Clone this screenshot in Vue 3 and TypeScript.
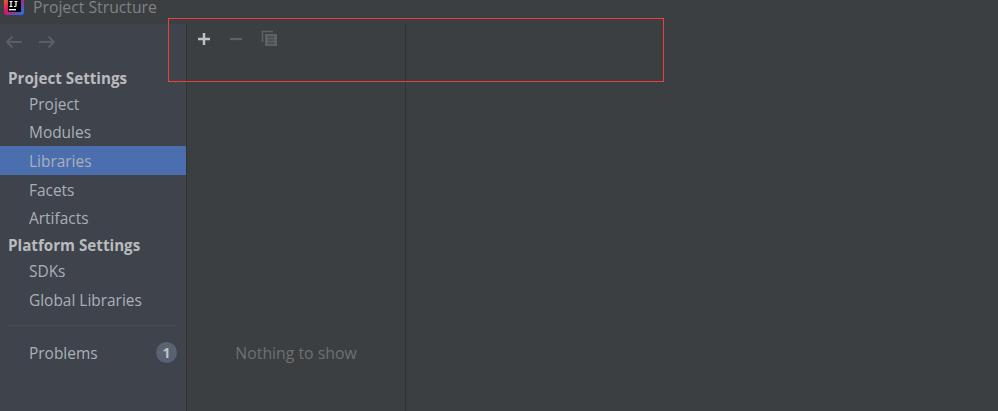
<script setup lang="ts">
interface Item { label: string; selected?: boolean }
const projectItems: Item[] = [
  { label: 'Project' },
  { label: 'Modules' },
  { label: 'Libraries', selected: true },
  { label: 'Facets' },
  { label: 'Artifacts' },
]
const platformItems: Item[] = [{ label: 'SDKs' }, { label: 'Global Libraries' }]
</script>

<template>
  <div class="window">
    <header class="titlebar">
      <svg class="logo" width="24" height="18" viewBox="0 0 24 18">
        <defs>
          <linearGradient id="lg" x1="0" y1="0" x2="1" y2="1">
            <stop offset="0" stop-color="#f97a12" />
            <stop offset="0.45" stop-color="#dd1265" />
            <stop offset="1" stop-color="#087cfa" />
          </linearGradient>
        </defs>
        <rect x="4" y="-5" width="20" height="20" rx="3" fill="url(#lg)" />
        <rect x="8" y="-2" width="13" height="14" fill="#000" />
        <rect x="9" y="9" width="7" height="1.4" fill="#fff" />
        <path d="M9.500 1.500h3M11 1.500v5M9.500 6.500h3M14.500 1.500h3M16 1.500v4.200q0 .8-1 .8h-1" stroke="#fff" stroke-width="1.200" fill="none" />
      </svg>
      <span class="title">Project Structure</span>
    </header>
    <div class="body">
      <aside class="sidebar">
        <div class="nav-arrows">
          <svg width="18" height="14" viewBox="0 0 18 14"><path d="M17 7H2M7.500 1.500 2 7l5.500 5.500" fill="none" stroke="#5b5e61" stroke-width="2" /></svg>
          <svg width="18" height="14" viewBox="0 0 18 14"><path d="M1 7h15M10.500 1.500 16 7l-5.500 5.500" fill="none" stroke="#5b5e61" stroke-width="2" /></svg>
        </div>
        <div class="heading first">Project Settings</div>
        <div v-for="i in projectItems" :key="i.label" class="item" :class="{ selected: i.selected }">{{ i.label }}</div>
        <div class="heading">Platform Settings</div>
        <div v-for="i in platformItems" :key="i.label" class="item low">{{ i.label }}</div>
        <div class="divider"></div>
        <div class="item problems">
          <span>Problems</span>
          <span class="badge">1</span>
        </div>
      </aside>
      <section class="list-panel">
        <div class="toolbar">
          <svg width="14" height="14" viewBox="0 0 14 14"><path d="M7 1v12M1 7h12" stroke="#bfc1c3" stroke-width="2.500" /></svg>
          <svg width="14" height="14" viewBox="0 0 14 14"><path d="M1 7h12" stroke="#5f6264" stroke-width="2.200" /></svg>
          <svg class="copy" width="17" height="17" viewBox="0 0 17 17">
            <path d="M1.500 12V1.500H12" fill="none" stroke="#5f6264" stroke-width="1.500" />
            <rect x="4" y="4" width="12" height="12" fill="#5f6264" />
            <path d="M6.500 7h7M6.500 10h7M6.500 13h7" stroke="#3c3f41" stroke-width="1.200" />
          </svg>
        </div>
        <div class="empty">Nothing to show</div>
      </section>
      <section class="detail"></section>
    </div>
    <div class="annotation"></div>
  </div>
</template>

<style>
html, body { margin: 0; background: #3c3f41; }
</style>

<style scoped>
.window {
  position: relative;
  width: 998px;
  height: 411px;
  overflow: hidden;
  background: #3c3f41;
  font-family: "Open Sans", "Noto Sans", sans-serif;
  font-size: 15.450px;
  color: #b4b8bd;
  display: flex;
  flex-direction: column;
}
.titlebar {
  height: 24px;
  flex: none;
  display: flex;
  align-items: flex-start;
}
.logo { flex: none; margin-right: 9px; }
.title {
  color: #7f8285;
  font-size: 15.750px;
  line-height: 15px;
}
.body { flex: 1; display: flex; min-height: 0; }
.sidebar {
  width: 186px;
  flex: none;
  background: #3e434c;
  border-right: 1px solid #323232;
  display: flex;
  flex-direction: column;
}
.nav-arrows {
  height: 25px;
  display: flex;
  align-items: flex-end;
  gap: 15px;
  padding-left: 5px;
}
.heading {
  height: 25.400px;
  padding-left: 8px;
  line-height: 27.400px;
  font-weight: 700;
  color: #b9bbbd;
  font-size: 15.200px;
}
.heading.first {
  margin-top: 14px;
  height: 25.800px;
  line-height: 30px;
}
.item {
  height: 28.600px;
  line-height: 30.400px;
  padding-left: 29px;
  color: #aab0b8;
}
.item.low { line-height: 28.600px; }
.item.selected { background: #4b6eaf; }
.divider {
  height: 1px;
  background: #4a4d50;
  margin: 10.600px 9px 12.700px 9px;
}
.problems {
  display: flex;
  align-items: center;
  justify-content: space-between;
  padding-right: 9px;
}
.badge {
  width: 21px;
  height: 21px;
  border-radius: 50%;
  background: #5a6172;
  color: #bfc3c8;
  font-weight: 700;
  font-size: 14px;
  line-height: 21px;
  text-align: center;
}
.list-panel {
  width: 218px;
  flex: none;
  border-right: 1px solid #323232;
  display: flex;
  flex-direction: column;
}
.toolbar {
  display: flex;
  align-items: center;
  gap: 18px;
  padding: 6px 0 0 10px;
  height: 18px;
}
.copy { margin-top: -2px; }
.empty {
  margin-top: 295px;
  text-align: center;
  color: #6e7072;
  font-size: 15.800px;
  line-height: 20px;
}
.detail { flex: 1; }
.annotation {
  position: absolute;
  left: 168px;
  top: 18px;
  width: 494px;
  height: 62px;
  border: 1px solid #f03c3c;
}
</style>
